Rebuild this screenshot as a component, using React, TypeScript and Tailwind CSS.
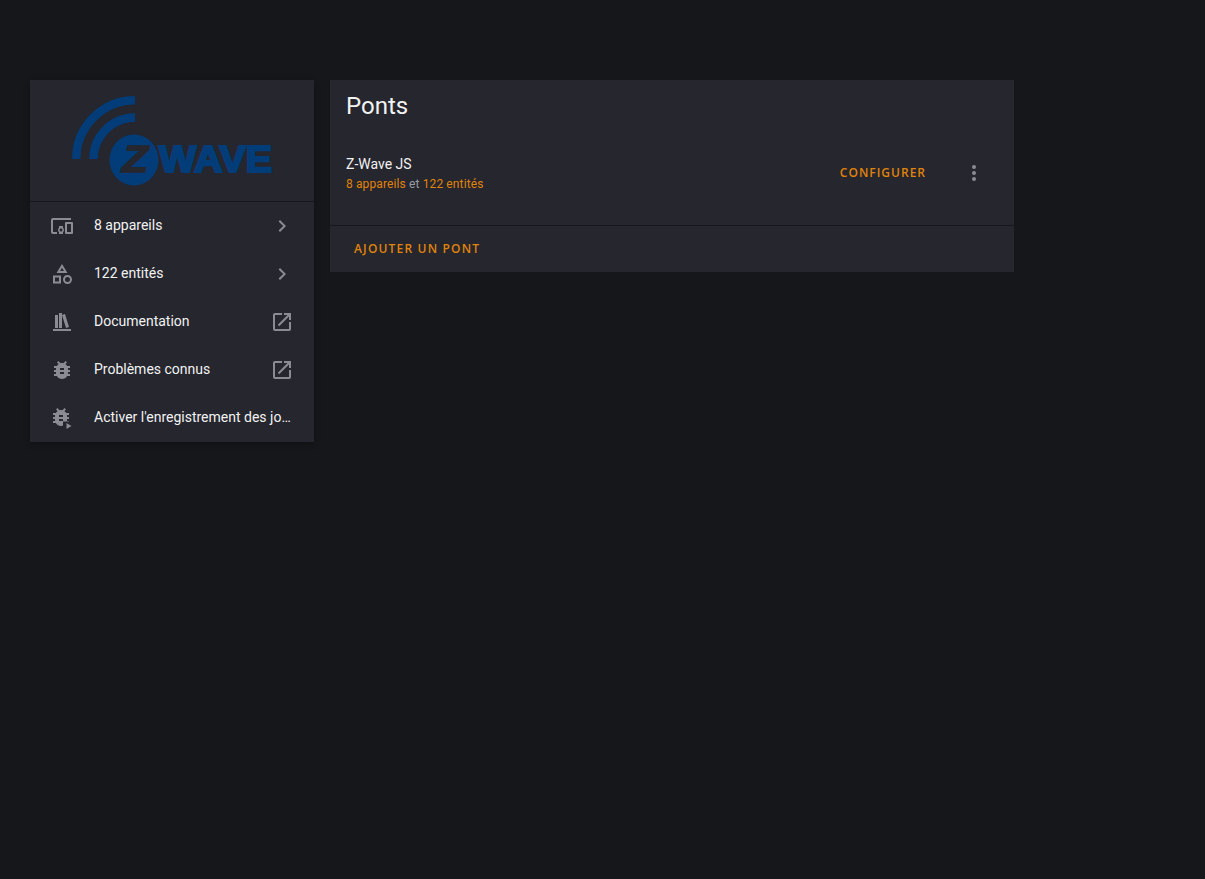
const icons = {
  devices:
    "M3 6H21V4H3C1.9 4 1 4.9 1 6V18C1 19.1 1.9 20 3 20H7V18H3V6M13 12H9V13.78C8.39 14.33 8 15.11 8 16C8 16.89 8.39 17.67 9 18.22V20H13V18.22C13.61 17.67 14 16.88 14 16S13.61 14.33 13 13.78V12M11 17.5C10.17 17.5 9.5 16.83 9.5 16S10.17 14.5 11 14.5 12.5 15.17 12.5 16 11.83 17.5 11 17.5M22 8H16C15.5 8 15 8.5 15 9V19C15 19.5 15.5 20 16 20H22C22.5 20 23 19.5 23 19V9C23 8.5 22.5 8 22 8M21 18H17V10H21V18Z",
  shape:
    "M11,13.5V21.5H3V13.5H11M9,15.5H5V19.5H9V15.5M12,2L17.5,11H6.5L12,2M12,5.86L10.08,9H13.92L12,5.86M17.5,13C20,13 22,15 22,17.5C22,20 20,22 17.5,22C15,22 13,20 13,17.5C13,15 15,13 17.5,13M17.5,15A2.5,2.5 0 0,0 15,17.5A2.5,2.5 0 0,0 17.5,20A2.5,2.5 0 0,0 20,17.5A2.5,2.5 0 0,0 17.5,15Z",
  library: "M9 3V18H12V3H9M12 5L16 18L19 17L15 4L12 5M5 5V18H8V5H5M3 19V21H21V19H3Z",
  bug: "M14,12H10V10H14M14,16H10V14H14M20,8H17.19C16.74,7.22 16.12,6.55 15.37,6.04L17,4.41L15.59,3L13.42,5.17C12.96,5.06 12.5,5 12,5C11.5,5 11.04,5.06 10.59,5.17L8.41,3L7,4.41L8.62,6.04C7.88,6.55 7.26,7.22 6.81,8H4V10H6.09C6.04,10.33 6,10.66 6,11V12H4V14H6V15C6,15.34 6.04,15.67 6.09,16H4V18H6.81C8.47,20.87 12.14,21.84 15,20.18C15.91,19.66 16.67,18.9 17.19,18H20V16H17.91C17.96,15.67 18,15.34 18,15V14H20V12H18V11C18,10.66 17.96,10.33 17.91,10H20V8Z",
  chevron: "M8.59,16.58L13.17,12L8.59,7.41L10,6L16,12L10,18L8.59,16.58Z",
  external:
    "M14,3V5H17.59L7.76,14.83L9.17,16.24L19,6.41V10H21V3M19,19H5V5H12V3H5C3.89,3 3,3.9 3,5V19A2,2 0 0,0 5,21H19A2,2 0 0,0 21,19V12H19V19Z",
  dots: "M12,16A2,2 0 0,1 14,18A2,2 0 0,1 12,20A2,2 0 0,1 10,18A2,2 0 0,1 12,16M12,10A2,2 0 0,1 14,12A2,2 0 0,1 12,14A2,2 0 0,1 10,12A2,2 0 0,1 12,10M12,4A2,2 0 0,1 14,6A2,2 0 0,1 12,8A2,2 0 0,1 10,6A2,2 0 0,1 12,4Z",
};

function Icon({ d, className = "" }: { d: string; className?: string }) {
  return (
    <svg viewBox="0 0 24 24" className={`h-6 w-6 shrink-0 fill-[#8b8b94] ${className}`}>
      <path d={d} />
    </svg>
  );
}

function BugPlay() {
  return (
    <svg viewBox="0 0 24 24" className="h-6 w-6 shrink-0 fill-[#8b8b94]">
      <path d={icons.bug} transform="translate(-1 -1)" />
      <path d="M13 15.5h11v8.5H13z" fill="#25262e" />
      <path d="M16.5 17V23L21.5 20Z" />
    </svg>
  );
}

function Logo() {
  const blue = "#023d7a";
  const wordFont = "'Liberation Sans', sans-serif";
  return (
    <svg viewBox="0 0 284 121" className="h-[121px] w-[284px]">
      <path d="M46.25 79A58.75 58.75 0 0 1 105 20.25" fill="none" stroke={blue} strokeWidth="8.5" />
      <path d="M63.5 79A41.5 41.5 0 0 1 105 37.5" fill="none" stroke={blue} strokeWidth="8.5" />
      <ellipse cx="104" cy="80" rx="24.5" ry="25.5" fill={blue} />
      <text
        x="92"
        y="92"
        fontFamily={wordFont}
        fontWeight="700"
        fontStyle="italic"
        fontSize="36"
        fill="#25262e"
        stroke="#25262e"
        strokeWidth="1.5"
        textLength="26"
        lengthAdjust="spacingAndGlyphs"
      >
        Z
      </text>
      <text
        x="129"
        y="92"
        fontFamily={wordFont}
        fontWeight="700"
        fontSize="36"
        fill={blue}
        stroke={blue}
        strokeWidth="2.2"
        textLength="113"
        lengthAdjust="spacingAndGlyphs"
      >
        WAVE
      </text>
    </svg>
  );
}

const rows = [
  { label: "8 appareils", icon: <Icon d={icons.devices} />, end: "chevron" },
  { label: "122 entités", icon: <Icon d={icons.shape} />, end: "chevron" },
  { label: "Documentation", icon: <Icon d={icons.library} />, end: "external" },
  { label: "Problèmes connus", icon: <Icon d={icons.bug} />, end: "external" },
  { label: "Activer l'enregistrement des journaux", icon: <BugPlay />, end: "" },
];

export default function App() {
  return (
    <div className="min-h-screen bg-[#16171b] font-['Roboto',sans-serif]">
      <div className="flex items-start gap-4 pl-[30px] pt-20">
        <div className="w-[284px] bg-[#25262e] shadow-[0_2px_6px_rgba(0,0,0,0.3)]">
          <div className="h-[122px] border-b border-[#16171b]">
            <Logo />
          </div>
          {rows.map((row) => (
            <div key={row.label} className="flex h-12 items-center pl-5 pr-5">
              {row.icon}
              <span className="mb-[2px] ml-5 min-w-0 flex-1 truncate text-sm text-[#f2f2f2]">{row.label}</span>
              {row.end && <Icon d={row.end === "chevron" ? icons.chevron : icons.external} className="ml-2" />}
            </div>
          ))}
        </div>

        <div className="w-[684px] bg-[#25262e]">
          <div className="h-[146px] border-b border-[#16171b]">
            <h1 className="pl-4 pt-[10px] text-2xl leading-8 text-[#f2f2f2]">Ponts</h1>
            <div className="flex items-center pl-4 pr-[28px] pt-[32px]">
              <div className="flex-1">
                <div className="text-sm leading-5 text-[#f2f2f2]">Z-Wave JS</div>
                <div className="text-xs leading-5 tracking-[0.12px] text-[#9b9ba3]">
                  <span className="text-[#e0830a]">8 appareils</span> et{" "}
                  <span className="text-[#e0830a]">122 entités</span>
                </div>
              </div>
              <button className="mb-[2px] mr-[36px] font-['Open_Sans',sans-serif] text-xs font-semibold tracking-[1px] text-[#e0830a]">
                CONFIGURER
              </button>
              <Icon d={icons.dots} className="mb-[2px]" />
            </div>
          </div>
          <div className="flex h-[46px] items-center pl-6">
            <button className="font-['Open_Sans',sans-serif] text-xs font-semibold tracking-[1.18px] text-[#e0830a]">
              AJOUTER UN PONT
            </button>
          </div>
        </div>
      </div>
    </div>
  );
}
